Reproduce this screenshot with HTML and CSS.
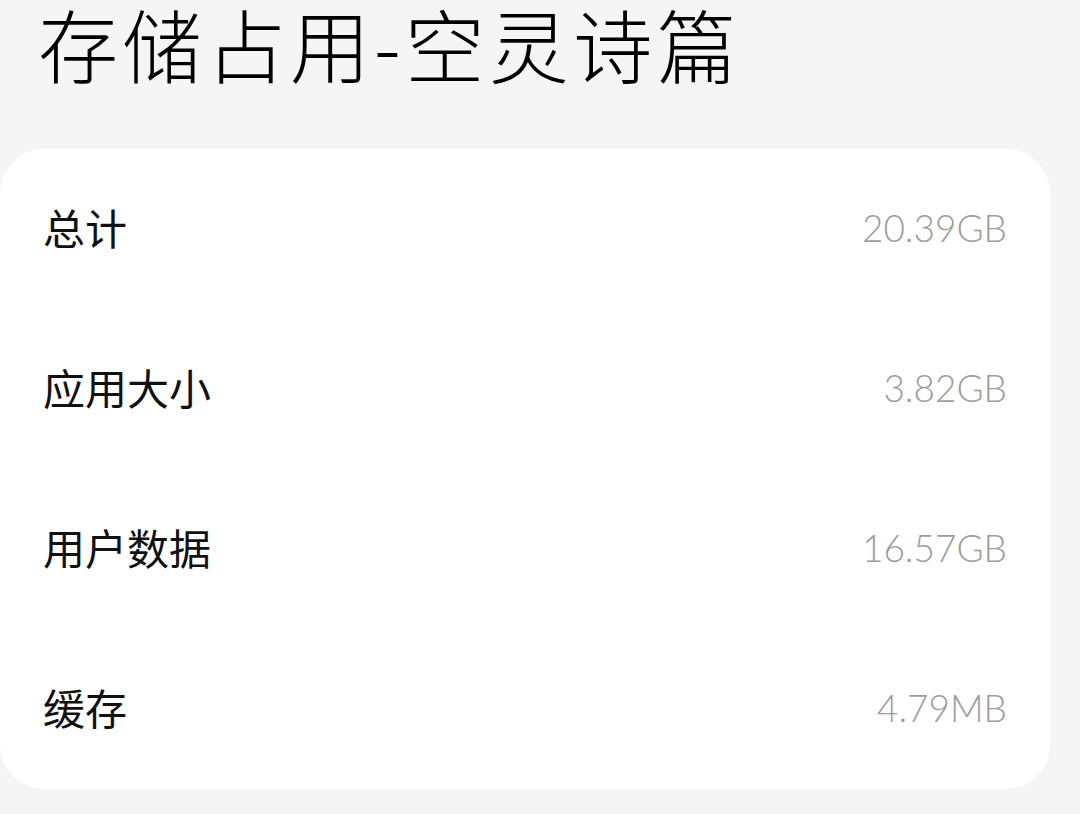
FILE: index.html
```html
<!DOCTYPE html>
<html lang="zh-CN">
<head>
<meta charset="utf-8">
<link rel="stylesheet" href="styles.css">
</head>
<body>
<div class="page">
  <h1 class="title">存储占用-空灵诗篇</h1>
  <div class="card">
    <div class="row"><span class="label">总计</span><span class="value">20.39GB</span></div>
    <div class="row"><span class="label">应用大小</span><span class="value">3.82GB</span></div>
    <div class="row"><span class="label">用户数据</span><span class="value">16.57GB</span></div>
    <div class="row"><span class="label">缓存</span><span class="value">4.79MB</span></div>
  </div>
</div>
</body>
</html>
```
FILE: styles.css
```css
html, body {
  margin: 0;
  padding: 0;
  background: #f5f5f5;
}
.page {
  width: 1080px;
  height: 814px;
  overflow: hidden;
  font-family: "Noto Sans CJK SC", "Noto Sans", sans-serif;
}
.title {
  margin: 0;
  padding: 0 0 0 38px;
  height: 149px;
  box-sizing: border-box;
  font-size: 80px;
  font-weight: 300;
  line-height: 84px;
  letter-spacing: 4px;
  color: #000;
}
.card {
  width: 1050px;
  background: #fff;
  border-radius: 44px;
  display: flex;
  flex-direction: column;
}
.row {
  height: 160px;
  display: flex;
  align-items: center;
  justify-content: space-between;
  padding: 0 43px 0 43px;
}
.label {
  font-size: 42px;
  line-height: 56px;
  padding-bottom: 4px;
  color: #111;
}
.value {
  font-family: Lato, "Noto Sans", sans-serif;
  font-weight: 300;
  font-size: 37px;
  line-height: 56px;
  padding-bottom: 2px;
  color: #9d9d9d;
}
```
